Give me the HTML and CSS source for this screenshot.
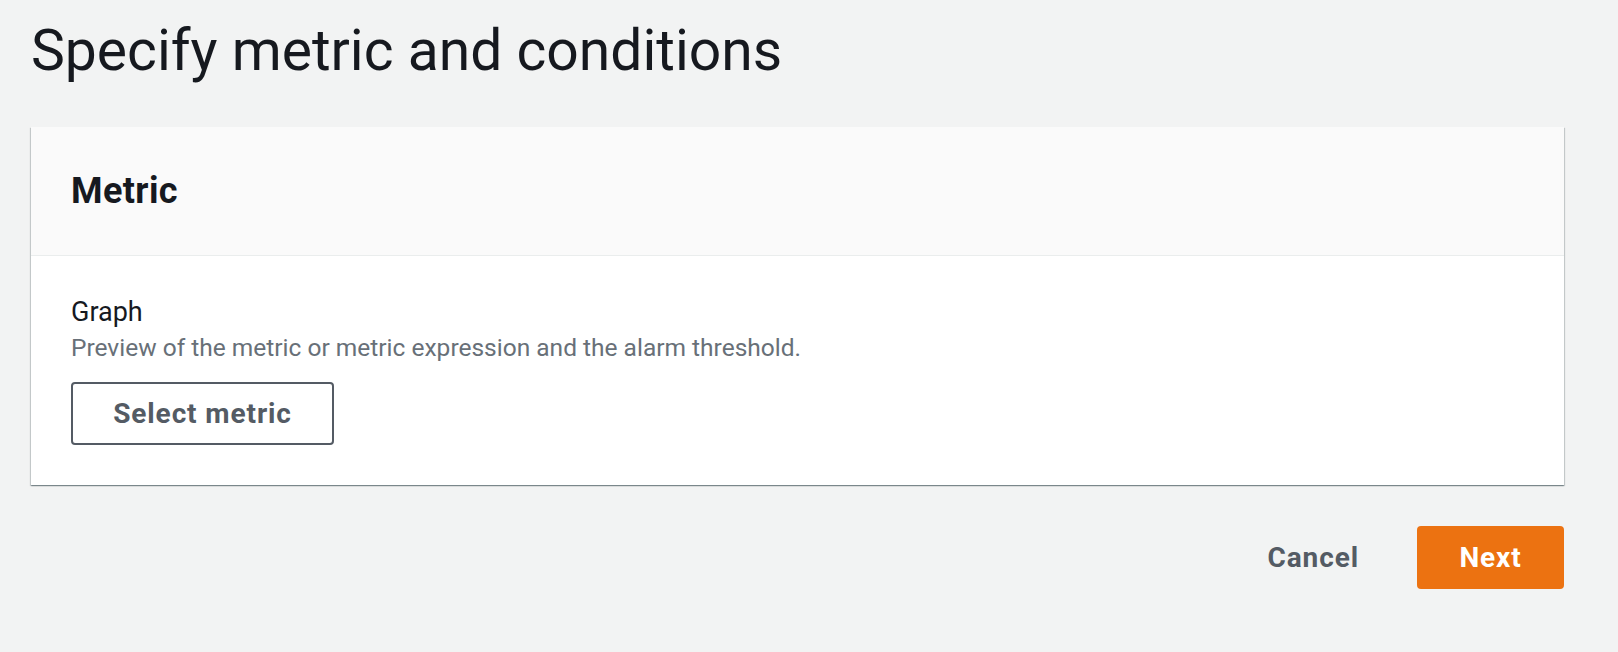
FILE: index.html
```html
<!DOCTYPE html>
<html lang="en">
<head>
    <meta charset="UTF-8">
    <title>Specify metric and conditions</title>
    <link rel="stylesheet" href="styles.css">
</head>
<body>
    <div class="page">
        <h1 class="page-title">Specify metric and conditions</h1>
        <div class="card">
            <div class="card-header">
                <h2>Metric</h2>
            </div>
            <div class="card-body">
                <div class="field-label">Graph</div>
                <div class="field-desc">Preview of the metric or metric expression and the alarm threshold.</div>
                <button class="btn btn-normal">Select metric</button>
            </div>
        </div>
        <div class="actions">
            <button class="btn btn-link">Cancel</button>
            <button class="btn btn-primary">Next</button>
        </div>
    </div>
</body>
</html>
```

FILE: styles.css
```css
body, h1, h2, div{
    margin: 0;
    padding: 0;
}
body{
    background: #f2f3f3;
    font-family: Roboto, "Noto Sans", sans-serif;
    color: #16191f;
}
.page{
    padding: 0 54px 0 31px;
}
.page-title{
    font-size: 57px;
    font-weight: 400;
    line-height: 64px;
    padding-top: 19px;
    margin-bottom: 44px;
}
.card{
    background: #fff;
    box-shadow: 0 1px 1px 0 rgba(0, 28, 36, 0.3), 1px 1px 1px 0 rgba(0, 28, 36, 0.15), -1px 1px 1px 0 rgba(0, 28, 36, 0.15);
}
.card-header{
    background: #fafafa;
    border-bottom: 1px solid #eaeded;
    height: 128px;
    display: flex;
    align-items: center;
    padding: 0 40px;
}
.card-header h2{
    font-size: 36px;
    font-weight: 700;
    line-height: 40px;
    letter-spacing: 0.4px;
}
.card-body{
    padding: 38px 40px 40px;
}
.field-label{
    font-size: 27px;
    line-height: 36px;
}
.field-desc{
    font-size: 24.5px;
    line-height: 35px;
    color: #687078;
    margin-bottom: 17px;
}
.btn{
    font-family: inherit;
    font-size: 28px;
    font-weight: 700;
    letter-spacing: 0.9px;
    border-radius: 4px;
    cursor: pointer;
}
.btn-normal{
    width: 263px;
    height: 63px;
    background: #fff;
    border: 2px solid #545b64;
    color: #545b64;
}
.actions{
    display: flex;
    justify-content: flex-end;
    align-items: center;
    gap: 38px;
    margin-top: 41px;
}
.btn-link{
    background: none;
    border: none;
    color: #545b64;
    padding: 0 20px;
}
.btn-primary{
    width: 147px;
    height: 63px;
    background: #ec7211;
    border: none;
    color: #fff;
}
```
